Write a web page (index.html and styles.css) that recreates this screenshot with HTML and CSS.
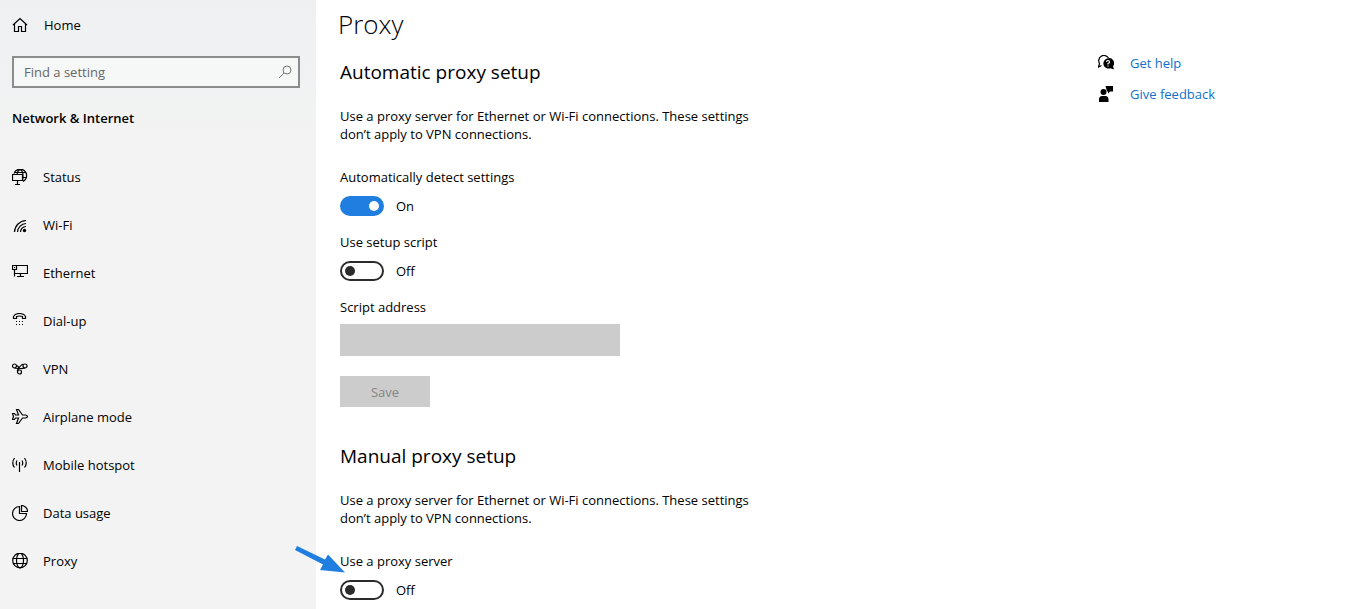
FILE: index.html
```html
<!DOCTYPE html>
<html lang="en">
<head>
    <meta charset="UTF-8">
    <meta name="viewport" content="width=device-width, initial-scale=1.0">
    <title>Proxy settings</title>
    <link rel="stylesheet" href="styles.css">
</head>
<body>
    <div class="settings">
        <aside class="sidebar">
            <a class="home" href="#">
                <svg class="icon" viewBox="0 0 16 16"><path d="M1 8 8 1.500 15 8M2.500 7v7.500h4V9.500h3v5h4V7"/></svg>
                <span>Home</span>
            </a>
            <form class="search">
                <input type="search" placeholder="Find a setting" aria-label="Find a setting">
                <svg class="icon search-icon" viewBox="0 0 16 16"><circle cx="10" cy="6" r="4"/><path d="M7 9 2 14"/></svg>
            </form>
            <h2 class="category">Network &amp; Internet</h2>
            <nav class="nav">
                <a href="#">
                    <svg class="icon" viewBox="0 0 16 16"><path d="M2 4.500A6.500 6.500 0 1 1 11 12.500M3 3.500h10.500M5 5Q5.500 1.500 8 .5Q11 2 11 6.500Q11 10 10.500 12M11 8.500h3.500M.5 5.500h10v6H.5zM5.500 11.500v4M3 15.500h5"/></svg>
                    <span>Status</span>
                </a>
                <a href="#">
                    <svg class="icon" viewBox="0 0 16 16"><path d="M2.500 15A12 12 0 0 1 14 3.500M5.500 15A9 9 0 0 1 14 6.500M8.500 15A6 6 0 0 1 14 9.500"/><circle class="solid" cx="12.500" cy="13.500" r="1.700"/></svg>
                    <span>Wi-Fi</span>
                </a>
                <a href="#">
                    <svg class="icon" viewBox="0 0 16 16"><path d="M4.500 .5h11v8h-13v-4M.5.500h4v4h-4zM2.500 4.500v7M8.500 8.500v3M5 11.500h7"/><path d="M2 2.500h1"/></svg>
                    <span>Ethernet</span>
                </a>
                <a href="#">
                    <svg class="icon" viewBox="0 0 16 16"><path d="M1.500 5.500V3.500Q3 .5 7.500.5T13.500 3.500V5.500H10.500V3.500Q7.500 2.500 4.500 3.500V5.500z"/><path d="M4 8.500h1M7 8.500h1M10 8.500h1M4 11.500h1M7 11.500h1M10 11.500h1"/></svg>
                    <span>Dial-up</span>
                </a>
                <a href="#">
                    <svg class="icon" viewBox="0 0 16 16"><circle cx="2.500" cy="5" r="2"/><circle cx="13" cy="5" r="2"/><circle cx="7.500" cy="11" r="2"/><path d="M4.500 4.500Q6 5 7 6.500T10.500 7.500L13 7M2.500 7 5.500 7.500Q7 7 8.500 5T11.500 3.500M5.500 10.500Q5 8.500 7.500 7.500"/></svg>
                    <span>VPN</span>
                </a>
                <a href="#">
                    <svg class="icon" viewBox="0 0 16 16"><path d="M.5 4.500H2.500L3.500 6H6.500L4.500 .5H6.500L10.500 6H13.500Q15.500 6.500 15.500 7.500T13.500 9H10.500L6.500 14.500H4.500L6.500 9H3.500L2.500 10.500H.5L1.500 7.500z"/></svg>
                    <span>Airplane mode</span>
                </a>
                <a href="#">
                    <svg class="icon" viewBox="0 0 16 16"><path d="M7.500 5V15M5 3.500Q3.500 6 5 8.500M10 3.500Q11.500 6 10 8.500M2.500 1Q-1 6 2.500 10.500M12.500 1Q16 6 12.500 10.500"/></svg>
                    <span>Mobile hotspot</span>
                </a>
                <a href="#">
                    <svg class="icon" viewBox="0 0 16 16"><path d="M7.500 1.500A7 7 0 1 0 14.500 8.500H7.500zM9.500.5V6.500H15.500A6 6 0 0 0 9.500.5z"/></svg>
                    <span>Data usage</span>
                </a>
                <a href="#">
                    <svg class="icon" viewBox="0 0 16 16"><circle cx="8" cy="7.500" r="7.300"/><ellipse cx="8" cy="7.500" rx="3.500" ry="7.300"/><path d="M1 5.500h14M1 10.500h14"/></svg>
                    <span>Proxy</span>
                </a>
            </nav>
        </aside>

        <main class="content">
            <h1>Proxy</h1>

            <section>
                <h2>Automatic proxy setup</h2>
                <p>Use a proxy server for Ethernet or Wi-Fi connections. These settings don’t apply to VPN connections.</p>
                <div class="field">
                    <label for="autoDetect">Automatically detect settings</label>
                    <div class="switch">
                        <input type="checkbox" id="autoDetect" checked>
                        <span>On</span>
                    </div>
                </div>
                <div class="field">
                    <label for="setupScript">Use setup script</label>
                    <div class="switch">
                        <input type="checkbox" id="setupScript">
                        <span>Off</span>
                    </div>
                </div>
                <div class="field">
                    <label for="scriptAddress">Script address</label>
                    <input class="address" type="text" id="scriptAddress" disabled>
                </div>
                <button class="save" type="button" disabled>Save</button>
            </section>

            <section>
                <h2>Manual proxy setup</h2>
                <p>Use a proxy server for Ethernet or Wi-Fi connections. These settings don’t apply to VPN connections.</p>
                <div class="field">
                    <label for="useProxy">Use a proxy server</label>
                    <div class="switch">
                        <input type="checkbox" id="useProxy">
                        <span>Off</span>
                    </div>
                    <svg class="pointer" viewBox="0 0 52 32"><path d="M3 2 31 15.500 34 10.500 51 28.500 26 26 29 20.500 1 6z"/></svg>
                </div>
            </section>
        </main>

        <aside class="help">
            <a href="#">
                <svg class="icon" viewBox="0 0 16 16"><path d="M3.500 10.500.5 12 1.500 8.500A5 5 0 1 1 10.500 3"/><path class="solid" d="M10 3.200a5 5 0 0 1 5 8l1 3.300-3.500-1.300a5.200 5.200 0 1 1-2.500-10z"/><path class="mark" d="M8.500 7Q8.500 5.500 10 5.500T11.500 7Q11.500 8 10 8.500V9.500M10 10.500v1"/></svg>
                <span>Get help</span>
            </a>
            <a href="#">
                <svg class="icon" viewBox="0 0 16 16"><circle class="solid" cx="5.500" cy="6" r="3"/><path class="solid" d="M1 16v-2.500Q1 10 4 10h3.500Q10.500 10 10.500 13.500V16zM7.500 0H15v5.500h-3l-2 2v-2H9z"/></svg>
                <span>Give feedback</span>
            </a>
        </aside>
    </div>
</body>
</html>
```
FILE: styles.css
```css
* {
    box-sizing: border-box;
}
body {
    margin: 0;
    font-family: "Open Sans", "Noto Sans", sans-serif;
    font-size: 13px;
    line-height: 18px;
    color: #000;
    background-color: #fff;
}
h1, h2, p {
    margin: 0;
    font-weight: normal;
}
a {
    color: inherit;
    text-decoration: none;
}
.settings {
    display: flex;
    min-height: 100vh;
}
.icon {
    width: 16px;
    height: 16px;
    flex-shrink: 0;
    fill: none;
    stroke: #000;
    stroke-width: 1.2;
}
.icon .solid {
    fill: #000;
    stroke: none;
}
.icon .mark {
    stroke: #fff;
}

/* sidebar */
.sidebar {
    width: 316px;
    flex-shrink: 0;
    padding: 8px 16px 0 12px;
    background: linear-gradient(#eef0f2, #f3f3f3 140px);
}
.home {
    display: flex;
    align-items: center;
    gap: 16px;
    height: 34px;
}
.search {
    display: flex;
    align-items: center;
    height: 32px;
    margin-top: 14px;
    padding: 0 5px 0 10px;
    border: 2px solid #8c8c8c;
    background-color: #f6f8f7;
}
.search input {
    flex: 1;
    min-width: 0;
    padding: 0;
    border: none;
    outline: none;
    background: none;
    font: inherit;
}
.search input::placeholder {
    color: #666;
}
.search .search-icon {
    stroke: #777;
    stroke-width: 1;
}
.category {
    margin-top: 21px;
    font-size: 13px;
    font-weight: 600;
}
.nav {
    margin-top: 26px;
}
.nav a {
    display: flex;
    align-items: center;
    gap: 15px;
    height: 48px;
}

/* main column */
.content {
    flex: 1;
    padding: 4px 20px 8px 22px;
}
.content h1 {
    font-size: 26px;
    font-weight: 300;
    line-height: 40px;
}
.content section {
    max-width: 430px;
    margin-top: 16px;
    padding-left: 2px;
}
.content section + section {
    margin-top: 37px;
}
.content h2 {
    font-size: 19px;
    line-height: 24px;
}
.content p {
    margin: 23px 0 25px;
}
.field {
    position: relative;
    margin-bottom: 17px;
}
.field:last-child {
    margin-bottom: 0;
}
.field label {
    display: block;
}
.switch {
    display: flex;
    align-items: center;
    gap: 12px;
    height: 20px;
    margin-top: 10px;
}
.switch input {
    appearance: none;
    display: flex;
    align-items: center;
    width: 44px;
    height: 20px;
    margin: 0;
    padding: 0 3px;
    border: 2px solid #2b2b2b;
    border-radius: 10px;
}
.switch input::before {
    content: "";
    width: 10px;
    height: 10px;
    border-radius: 50%;
    background-color: #2b2b2b;
}
.switch input:checked {
    justify-content: flex-end;
    border-color: #1f7ee0;
    background-color: #1f7ee0;
}
.switch input:checked::before {
    background-color: #fff;
}
.address {
    display: block;
    width: 280px;
    height: 32px;
    margin-top: 8px;
    border: none;
    background-color: #ccc;
}
.save {
    display: block;
    width: 90px;
    height: 31px;
    margin-top: 20px;
    border: none;
    background-color: #ccc;
    color: #858585;
    font: inherit;
}
.pointer {
    position: absolute;
    top: -8px;
    left: -46px;
    width: 52px;
    height: 32px;
    fill: #1f7ee0;
}

/* help links */
.help {
    width: 253px;
    flex-shrink: 0;
    padding-top: 54px;
}
.help a {
    display: flex;
    align-items: center;
    gap: 16px;
    margin-bottom: 13px;
    color: #0f6fd0;
}
```
